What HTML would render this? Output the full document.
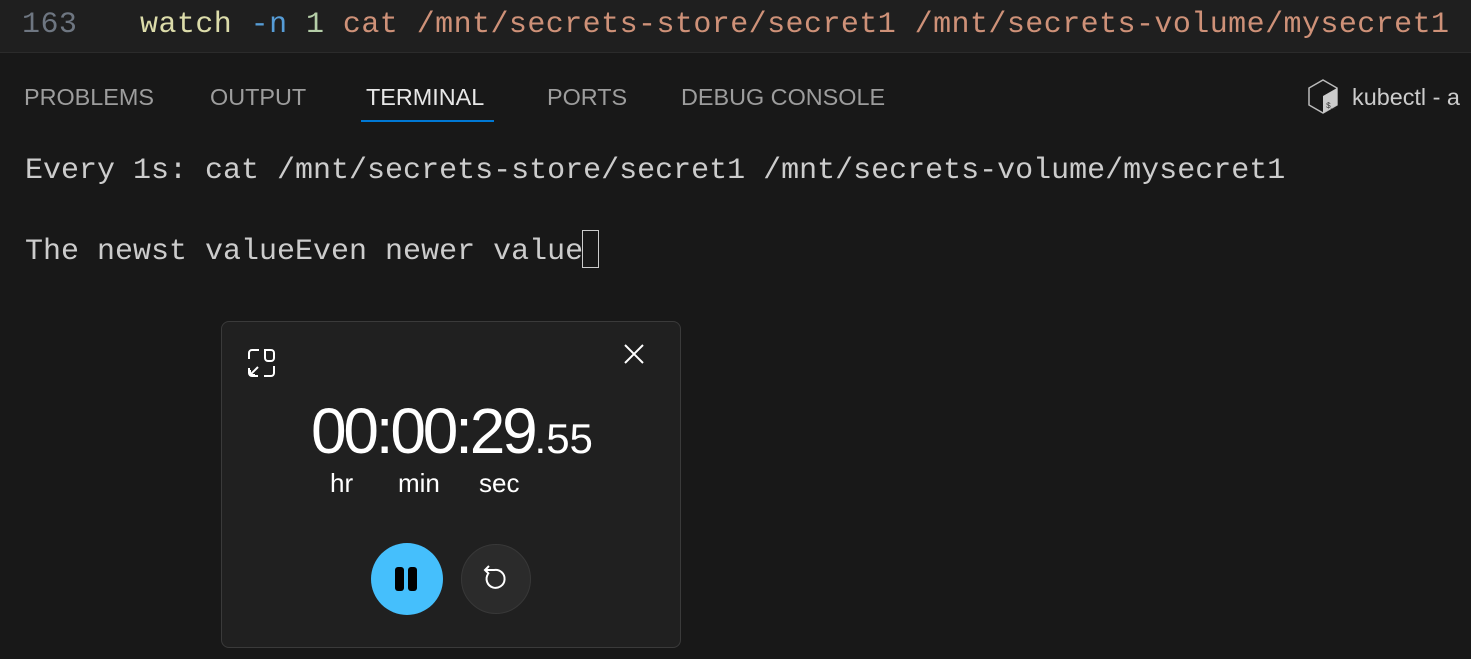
<!DOCTYPE html>
<html><head><meta charset="utf-8"><style>
html,body{margin:0;padding:0;width:1471px;height:659px;overflow:hidden;background:#181818;font-family:"Liberation Sans",sans-serif}
.top{position:absolute;left:0;top:0;width:1471px;height:52px;background:#1f1f1f;border-bottom:1px solid #2b2b2b}
.mono{font-family:"Liberation Mono","DejaVu Sans Mono",monospace;font-size:30px;white-space:pre;position:absolute}
.tab{position:absolute;top:84px;font-size:23.4px;color:#9d9d9d;white-space:nowrap}
.card{position:absolute;left:221px;top:321px;width:458px;height:325px;background:#202020;border:1px solid #3a3a3a;border-radius:8px}
</style></head><body>
<div class="top"></div>
<div class="mono" style="left:22px;top:8px;color:#6e7681;letter-spacing:0.44px">163</div>
<div class="mono" style="left:140px;top:8px;letter-spacing:0.44px"><span style="color:#dcdcaa">watch</span> <span style="color:#569cd6">-n</span> <span style="color:#b5cea8">1</span> <span style="color:#ce9178">cat /mnt/secrets-store/secret1 /mnt/secrets-volume/mysecret1</span></div>

<div class="tab" style="left:24px">PROBLEMS</div>
<div class="tab" style="left:210px">OUTPUT</div>
<div class="tab" style="left:366px;color:#e7e7e7">TERMINAL</div>
<div style="position:absolute;left:361px;top:120px;width:133px;height:2px;background:#0078d4"></div>
<div class="tab" style="left:547px">PORTS</div>
<div class="tab" style="left:681px">DEBUG CONSOLE</div>
<svg style="position:absolute;left:1305px;top:78px" width="36" height="38" viewBox="0 0 36 38">
<path d="M18 2 L32 10 L32 27 L18 35 L4 27 L4 10 Z" fill="none" stroke="#bbb" stroke-width="1.5"/>
<path d="M18 18 L32 10 L32 27 L18 35 Z" fill="#ccc"/>
<text x="21" y="30" font-size="8" fill="#333" font-family="Liberation Mono">$_</text>
</svg>
<div class="tab" style="left:1352px;color:#cccccc">kubectl - a</div>

<div class="mono" style="left:25px;top:154px;color:#cccccc">Every 1s: cat /mnt/secrets-store/secret1 /mnt/secrets-volume/mysecret1</div>
<div class="mono" style="left:25px;top:235px;color:#cccccc">The newst valueEven newer value</div>
<div style="position:absolute;left:582px;top:230px;width:15px;height:36px;border:1px solid #cccccc"></div>

<div class="card"></div>
<svg style="position:absolute;left:246px;top:347px" width="32" height="32" viewBox="0 0 32 32" fill="none" stroke="#fff" stroke-width="2">
<path d="M3 12 V6 a3 3 0 0 1 3 -3 H13"/><path d="M3 21 v5 a3 3 0 0 0 3 3 H12"/><path d="M18 29 h7 a3 3 0 0 0 3 -3 V19"/>
<path d="M19 3 h6 a3 3 0 0 1 3 3 v5 a3 3 0 0 1 -3 3 h-3 a3 3 0 0 1 -3 -3 Z" />
<path d="M4 28 L12 20 M4 28 H9 M4 28 V23"/>
</svg>
<svg style="position:absolute;left:622px;top:342px" width="24" height="24" viewBox="0 0 24 24" stroke="#fff" stroke-width="2"><path d="M3 3 L21 21 M21 3 L3 21"/></svg>
<div style="position:absolute;left:311px;top:394px;color:#fff;font-size:64px;white-space:nowrap;letter-spacing:-3.2px">00:00:29<span style="font-size:42px;letter-spacing:0">.55</span></div>
<div style="position:absolute;left:330px;top:468px;color:#fff;font-size:26px">hr</div>
<div style="position:absolute;left:398px;top:468px;color:#fff;font-size:26px">min</div>
<div style="position:absolute;left:479px;top:468px;color:#fff;font-size:26px">sec</div>
<div style="position:absolute;left:371px;top:543px;width:72px;height:72px;border-radius:50%;background:#45bffc"></div>
<div style="position:absolute;left:395px;top:567px;width:9px;height:24px;border-radius:3px;background:#000"></div>
<div style="position:absolute;left:408px;top:567px;width:9px;height:24px;border-radius:3px;background:#000"></div>
<div style="position:absolute;left:461px;top:544px;width:68px;height:68px;border-radius:50%;background:#2b2b2b;border:1px solid #383838"></div>
<svg style="position:absolute;left:480px;top:562px" width="32" height="32" viewBox="0 0 32 32" fill="none" stroke="#fff" stroke-width="2">
<path d="M5 8 H14 A9 9 0 1 1 8 12"/><path d="M9 4 L5 8 L9 12"/>
</svg>
</body></html>
